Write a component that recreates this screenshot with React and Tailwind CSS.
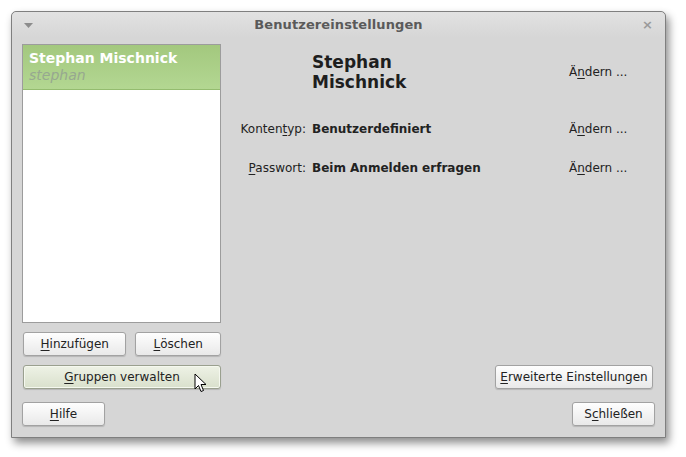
import React from 'react';

const font = { fontFamily: '"DejaVu Sans", Verdana, sans-serif' };

function Mn({ pre = '', u, post = '' }) {
    return (
        <>
            {pre}
            <span className="underline underline-offset-2 decoration-1">{u}</span>
            {post}
        </>
    );
}

function Btn({ children, className = '', hover = false }) {
    return (
        <button
            className={
                'flex items-center justify-center h-[24px] rounded-[3px] border text-[12px] text-[#222] shadow-[0_1px_1px_rgba(0,0,0,0.15)] ' +
                (hover
                    ? 'border-[#9aa08f] bg-gradient-to-b from-[#eef2e6] to-[#d9e0cc] ring-1 ring-inset ring-[#f5f8ef] '
                    : 'border-[#a2a2a2] bg-gradient-to-b from-[#fefefe] to-[#e9e9e9] ') +
                className
            }
        >
            {children}
        </button>
    );
}

function Cursor() {
    return (
        <svg width="13" height="20" viewBox="0 0 13 20" className="absolute left-[194px] top-[373px]">
            <path d="M1 1 L1 16 L4.5 12.5 L7 18.5 L9.5 17.5 L7 11.5 L12 11.5 Z" fill="#fff" stroke="#000" strokeWidth="1" strokeLinejoin="round" />
        </svg>
    );
}

export default function App() {
    return (
        <div className="relative w-[686px] h-[457px] bg-white overflow-hidden" style={font}>
            <div className="absolute left-[11px] top-[11px] w-[655px] h-[427px] flex flex-col bg-[#d6d6d6] border border-[#7f7f7f] rounded-t-[5px] shadow-[3px_5px_9px_rgba(0,0,0,0.45)]">
                {/* title bar */}
                <div className="relative h-[25px] flex items-center justify-center rounded-t-[5px] bg-gradient-to-b from-[#e2e2e2] to-[#d6d6d6]">
                    <svg width="9" height="5" viewBox="0 0 9 5" className="absolute left-[12px] top-[11px]">
                        <path d="M0 0 H9 L4.5 5 Z" fill="#8c8c8c" />
                    </svg>
                    <span className="text-[13px] font-bold text-[#5a5a5a] tracking-[0.1px] mt-[1px]">Benutzereinstellungen</span>
                    <span className="absolute right-[12px] top-[3px] text-[13px] font-bold text-[#9a9a9a]">×</span>
                </div>

                <div className="flex pl-[10px] pr-[12px] pt-[7px]">
                    {/* left column */}
                    <div className="w-[199px] flex flex-col">
                        <div className="h-[279px] bg-white border border-[#9c9c9c]">
                            <div className="h-[45px] bg-gradient-to-b from-[#a3c87e] to-[#b3d792] border-b border-[#94bc6f] px-[6px] pt-[5px]">
                                <div className="text-[14px] font-bold text-white leading-[17px]">Stephan Mischnick</div>
                                <div className="text-[14px] italic text-[#97a890] leading-[17px]">stephan</div>
                            </div>
                        </div>
                        <div className="flex mt-[9px] pl-[1px] gap-[9px]">
                            <Btn className="w-[104px]"><Mn u="H" post="inzufügen" /></Btn>
                            <Btn className="w-[86px]"><Mn u="L" post="öschen" /></Btn>
                        </div>
                        <Btn hover className="mt-[9px] ml-[1px] w-[198px]"><Mn u="G" post="ruppen verwalten" /></Btn>
                    </div>

                    {/* right column */}
                    <div className="flex-1 flex flex-col text-[12px] text-[#222]">
                        <div className="flex items-center mt-[7px] h-[42px]">
                            <div className="w-[91px]" />
                            <div className="w-[257px] text-[17px] font-bold leading-[20px] text-[#1e1e1e]">Stephan<br />Mischnick</div>
                            <div><Mn pre="Ä" u="n" post="dern ..." /></div>
                        </div>
                        <div className="flex items-center mt-[27px] h-[18px]">
                            <div className="w-[85px] text-right"><Mn pre="Konten" u="t" post="yp:" /></div>
                            <div className="w-[6px]" />
                            <div className="w-[257px] font-bold">Benutzerdefiniert</div>
                            <div><Mn pre="Ä" u="n" post="dern ..." /></div>
                        </div>
                        <div className="flex items-center mt-[21px] h-[18px]">
                            <div className="w-[85px] text-right"><Mn u="P" post="asswort:" /></div>
                            <div className="w-[6px]" />
                            <div className="w-[257px] font-bold">Beim Anmelden erfragen</div>
                            <div><Mn pre="Ä" u="n" post="dern ..." /></div>
                        </div>
                        <div className="flex-1" />
                        <div className="flex justify-end">
                            <Btn className="w-[158px]"><Mn u="E" post="rweiterte Einstellungen" /></Btn>
                        </div>
                    </div>
                </div>

                <div className="flex justify-between mt-[13px] px-[10px]">
                    <Btn className="w-[83px]"><Mn u="H" post="ilfe" /></Btn>
                    <Btn className="w-[83px]"><Mn pre="S" u="c" post="hließen" /></Btn>
                </div>
            </div>
            <Cursor />
        </div>
    );
}
